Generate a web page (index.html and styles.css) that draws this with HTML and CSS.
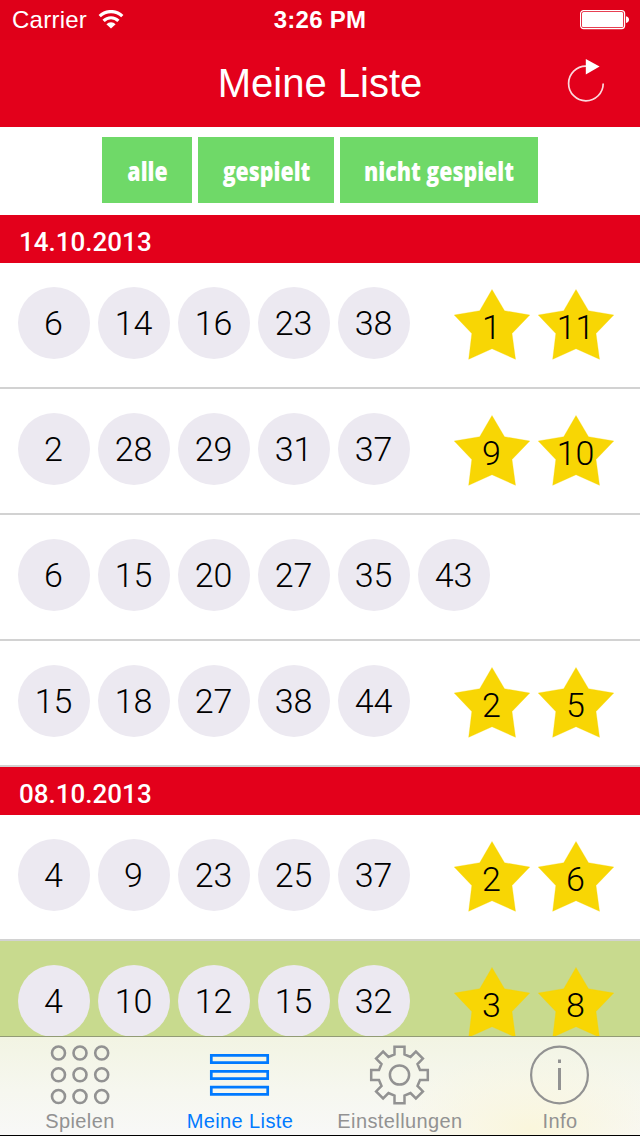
FILE: index.html
```html
<!DOCTYPE html>
<html lang="de">
<head>
<meta charset="utf-8">
<title>Meine Liste</title>
<link rel="stylesheet" href="styles.css">
</head>
<body>
<svg width="0" height="0" class="defs">
  <symbol id="star" viewBox="0 0 76 71"><path d="M38 .5 50.5 21.7 75.8 26 58 44.5 61.5 70.3 38 59.7 14.7 70.3 17.8 44.5 .2 26 25.7 21.7Z" fill="#f8d604" stroke="#f8d604" stroke-opacity=".3"/></symbol>
</svg>
<div class="app">
  <header class="top">
    <div class="status">
      <div class="carrier"><span>Carrier</span>
        <svg width="26" height="20" viewBox="0 0 26 20"><g fill="none" stroke="#fff" stroke-width="3.2"><path d="M1.7 6.2a16 16 0 0 1 22.6 0"/><path d="M5.6 10.8a10.5 10.5 0 0 1 14.8 0"/></g><path d="M8.4 14.2a6.4 6.4 0 0 1 9.2 0L13 18.6Z" fill="#fff"/></svg>
      </div>
      <div class="time">3:26 PM</div>
      <div class="battery"><svg width="50" height="20" viewBox="0 0 50 20"><rect x=".6" y=".6" width="44" height="18" rx="3" fill="none" stroke="#fff" stroke-width="1.2"/><rect x="2" y="2" width="41.2" height="15.2" rx="1.5" fill="#fff"/><path d="M46 6.2q3 .8 3 3.4t-3 3.4Z" fill="#fff"/></svg></div>
    </div>
    <div class="nav">
      <span></span>
      <h1>Meine Liste</h1>
      <svg width="38" height="44" viewBox="0 0 38 44"><path d="M19 8.2A17.3 17.3 0 1 0 36.2 25.5" fill="none" stroke="#fff" stroke-width="1.7" stroke-opacity=".85"/><path d="M18.8 1 32.6 8.6 18.8 16.5Z" fill="#fff"/></svg>
    </div>
  </header>
  <div class="filters">
    <button class="f1"><span>alle</span></button>
    <button class="f2"><span>gespielt</span></button>
    <button class="f3"><span>nicht gespielt</span></button>
  </div>
  <main class="list">
    <h2>14.10.2013</h2>
    <div class="row"><b>6</b><b>14</b><b>16</b><b>23</b><b>38</b><div class="stars"><i><svg><use href="#star"/></svg><span>1</span></i><i><svg><use href="#star"/></svg><span>11</span></i></div></div>
    <div class="row"><b>2</b><b>28</b><b>29</b><b>31</b><b>37</b><div class="stars"><i><svg><use href="#star"/></svg><span>9</span></i><i><svg><use href="#star"/></svg><span>10</span></i></div></div>
    <div class="row"><b>6</b><b>15</b><b>20</b><b>27</b><b>35</b><b>43</b></div>
    <div class="row"><b>15</b><b>18</b><b>27</b><b>38</b><b>44</b><div class="stars"><i><svg><use href="#star"/></svg><span>2</span></i><i><svg><use href="#star"/></svg><span>5</span></i></div></div>
    <h2>08.10.2013</h2>
    <div class="row"><b>4</b><b>9</b><b>23</b><b>25</b><b>37</b><div class="stars"><i><svg><use href="#star"/></svg><span>2</span></i><i><svg><use href="#star"/></svg><span>6</span></i></div></div>
    <div class="row played"><b>4</b><b>10</b><b>12</b><b>15</b><b>32</b><div class="stars"><i><svg><use href="#star"/></svg><span>3</span></i><i><svg><use href="#star"/></svg><span>8</span></i></div></div>
  </main>
  <nav class="tabs">
    <a><svg width="62" height="62" viewBox="-31 -31 62 62"><g fill="none" stroke="#929292" stroke-width="2.6"><circle cx="-21.5" cy="-22" r="6.5"/><circle cx="0" cy="-22" r="6.5"/><circle cx="21.7" cy="-22" r="6.5"/><circle cx="-21.5" cy="-.2" r="6.5"/><circle cx="0" cy="-.2" r="6.5"/><circle cx="21.7" cy="-.2" r="6.5"/><circle cx="-21.5" cy="21.5" r="6.5"/><circle cx="0" cy="21.5" r="6.5"/><circle cx="21.7" cy="21.5" r="6.5"/></g></svg><span>Spielen</span></a>
    <a class="active"><svg width="62" height="62" viewBox="-31 -31 62 62"><g fill="none" stroke="#007aff" stroke-width="2.7"><path d="M-28.7-19.6H27.7V-12.4H-28.7ZM-28.7-3.6H27.7V3.6H-28.7ZM-28.7 12.1H27.7V19.3H-28.7Z"/></g></svg><span>Meine Liste</span></a>
    <a><svg width="62" height="62" viewBox="-31 -31 62 62"><g transform="translate(-.5 0)" fill="none" stroke="#929292" stroke-width="2.5"><circle r="9.6"/><path d="M-5-20.5V-28.3H5V-20.5L11-18 16.4-23.4 23.4-16.4 18-11 20.5-5H28.3V5H20.5L18 11 23.4 16.4 16.4 23.4 11 18 5 20.5V28.3H-5V20.5L-11 18-16.4 23.4-23.4 16.4-18 11-20.5 5H-28.3V-5H-20.5L-18-11-23.4-16.4-16.4-23.4-11-18Z"/></g></svg><span>Einstellungen</span></a>
    <a><svg width="62" height="62" viewBox="-31 -31 62 62"><g transform="translate(-.5 0)"><circle r="28.4" fill="none" stroke="#929292" stroke-width="2.2"/><path d="M-1.5-15.5h3v3.5h-3ZM-1.5-7h3V15h-3Z" fill="#929292"/></g></svg><span>Info</span></a>
  </nav>
</div>
</body>
</html>
```
FILE: styles.css
```css
* { box-sizing: border-box; }
body { margin: 0; font-family: "Liberation Sans", sans-serif; }
.defs { display: block; }
.app { display: flex; flex-direction: column; width: 640px; height: 1136px; overflow: hidden; background: #fff; }
.top { height: 127px; background: #e3001b; color: #fff; flex: none; }
.status { height: 40px; display: grid; grid-template-columns: 1fr auto 1fr; align-items: center; padding: 0 10px 0 12px; font-size: 24px; background: #df0019; }
.carrier { display: flex; align-items: center; gap: 11px; letter-spacing: .25px; }
.time { font-weight: bold; font-size: 24px; letter-spacing: .25px; margin-left: -2px; }
.battery { display: flex; justify-content: flex-end; }
.nav { height: 87px; display: grid; grid-template-columns: 1fr auto 1fr; align-items: center; padding: 0 35px; }
.nav h1 { margin: 0; font-size: 40px; font-weight: normal; line-height: 87px; }
.nav svg { justify-self: end; margin-top: -8px; }
.filters { height: 88px; flex: none; display: flex; justify-content: center; gap: 6px; padding-top: 10px; }
.filters button { height: 66px; border: 0; padding: 0; background: #6fd968; color: #fff; font: 800 27px "Open Sans", sans-serif; white-space: nowrap; display: flex; justify-content: center; align-items: center; }
.filters span { flex: none; transform: scaleX(.79); }
.f1 { width: 90px; }
.f2 { width: 136px; }
.f3 { width: 198px; }
.list { flex: 1; min-height: 0; overflow: hidden; }
.list h2 { height: 48px; margin: 0; padding: 3px 19px 0; background: #e3001b; color: #fff; font: 500 26px/48px Roboto, sans-serif; }
.row { height: 126px; display: flex; gap: 8px; padding: 24px 26px 0 18px; border-bottom: 2px solid #d2d2d2; font: 300 34px/72px Roboto, sans-serif; color: #000; }
.row b { width: 72px; height: 72px; padding-right: 1px; border-radius: 50%; background: #ece9f1; font-weight: 300; text-align: center; }
.played { background: #c8da8e; }
.stars { margin-left: auto; display: flex; gap: 8px; padding-top: 2px; }
.stars i { display: grid; width: 76px; height: 71px; font-style: normal; text-align: center; }
.stars i > * { grid-area: 1 / 1; }
.stars svg { width: 76px; height: 71px; }
.stars span { line-height: 76px; padding-right: 1px; }
.tabs { flex: none; height: 100px; display: grid; grid-template-columns: repeat(4, 160px); border-top: 1px solid #929b76; border-bottom: 1px solid #000; background: radial-gradient(ellipse 150px 75px at 530px 92px, #faf6dc, transparent), linear-gradient(#f2f4e3, #f6f7ef 55%, #f8f8f7); color: #929292; font-size: 20px; }
.tabs a { display: flex; flex-direction: column; align-items: center; padding-top: 7px; }
.tabs svg { display: block; }
.tabs span { line-height: 24px; margin-top: 3px; letter-spacing: .4px; }
.active { color: #007aff; }
```
